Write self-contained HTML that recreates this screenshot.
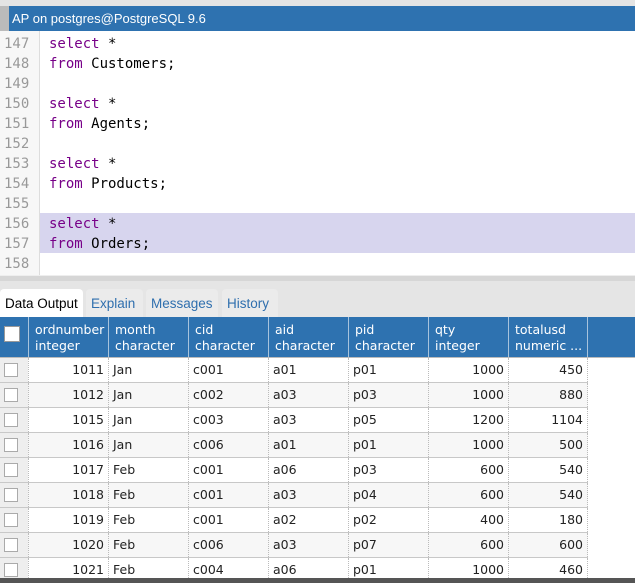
<!DOCTYPE html><html><head><style>
body{margin:0;width:635px;height:583px;overflow:hidden;background:#fff;font-family:"DejaVu Sans","Liberation Sans",sans-serif;position:relative}
.top{position:absolute;left:0;top:0;width:635px;height:6px;background:#e4e4e4}
.title{position:absolute;left:0;top:6px;width:635px;height:25px;background:#2e72b0;color:#fff;font:13px "Liberation Sans",sans-serif;line-height:25px}
.title .g{position:absolute;left:0;top:0;width:9px;height:25px;background:#bbb}
.title span{position:absolute;left:12px}
.gut{position:absolute;left:0;top:31px;width:39px;height:244px;background:#f7f7f7;border-right:1px solid #ddd}
.ln{position:absolute;left:4px;font:14px "DejaVu Sans Mono",monospace;color:#999;line-height:20px}
.code{position:absolute;left:49px;font:14px "DejaVu Sans Mono",monospace;color:#000;line-height:20px;white-space:pre}
.k{color:#708}
.hl{position:absolute;left:40px;top:213px;width:595px;height:40px;background:#d7d5ee}
.sep{position:absolute;left:0;top:275px;width:635px;height:6px;background:#d6d6d6;border-top:1px solid #eee}
.tabs{position:absolute;left:0;top:281px;width:635px;height:36px;background:#e5e5e5}
.tab{position:absolute;top:8px;height:28px;font:13.5px "Liberation Sans",sans-serif;line-height:30px;color:#2f6fae;background:#ebebeb;border-radius:4px 4px 0 0;padding:0 5px;white-space:nowrap;box-sizing:border-box}
.hdr{position:absolute;left:0;top:317px;width:635px;height:40px;background:#2e72b0;border-bottom:1px solid #bbb}
.hc{position:absolute;top:0;height:40px;border-left:1px solid #a7c3dd;color:#fff;font-size:12.5px;line-height:16px;padding:5px 0 0 6px;box-sizing:border-box}
.row{position:absolute;left:0;width:588px;height:25px;border-bottom:1px solid #c8c8c8;box-sizing:border-box;font-size:12.5px;color:#222}
.c{position:absolute;top:0;height:24px;line-height:24px;border-left:1px dotted #bbb;box-sizing:border-box;padding:0 4px}
.r{text-align:right}
.cb{position:absolute;left:0;top:0;width:28px;height:24px;background:#eee}
.cb i{position:absolute;left:4px;top:5px;width:12px;height:12px;background:#fff;border:1px solid #aaa}
.bot{position:absolute;left:0;top:578px;width:635px;height:5px;background:#555}
</style></head><body>
<div class="top"></div>
<div class="title"><div class="g"></div><span>AP on postgres@PostgreSQL 9.6</span></div>
<div class="gut"></div>
<div class="hl"></div>
<div class="ln" style="top:34px">147<br>148<br>149<br>150<br>151<br>152<br>153<br>154<br>155<br>156<br>157<br>158</div>
<div class="code" style="top:34px"><span class="k">select</span> *
<span class="k">from</span> Customers;

<span class="k">select</span> *
<span class="k">from</span> Agents;

<span class="k">select</span> *
<span class="k">from</span> Products;

<span class="k">select</span> *
<span class="k">from</span> Orders;
</div>
<div class="sep"></div>
<div class="tabs">
<div class="tab" style="left:0;width:83px;background:#fff;color:#000">Data Output</div>
<div class="tab" style="left:86px;width:57px">Explain</div>
<div class="tab" style="left:146px;width:72px">Messages</div>
<div class="tab" style="left:222px;width:56px">History</div>
</div>
<div class="hdr">
<div style="position:absolute;left:4px;top:9px;width:14px;height:14px;background:#fff;border:1px solid #999"></div>
<div class="hc" style="left:28px;width:80px">ordnumber<br>integer</div>
<div class="hc" style="left:108px;width:80px">month<br>character</div>
<div class="hc" style="left:188px;width:80px">cid<br>character</div>
<div class="hc" style="left:268px;width:80px">aid<br>character</div>
<div class="hc" style="left:348px;width:80px">pid<br>character</div>
<div class="hc" style="left:428px;width:80px">qty<br>integer</div>
<div class="hc" style="left:508px;width:80px;border-right:1px solid #a7c3dd">totalusd<br>numeric ...</div>
</div>
<div id="rows"></div>
<script>
var d=[[1011,'Jan','c001','a01','p01',1000,450],[1012,'Jan','c002','a03','p03',1000,880],[1015,'Jan','c003','a03','p05',1200,1104],[1016,'Jan','c006','a01','p01',1000,500],[1017,'Feb','c001','a06','p03',600,540],[1018,'Feb','c001','a03','p04',600,540],[1019,'Feb','c001','a02','p02',400,180],[1020,'Feb','c006','a03','p07',600,600],[1021,'Feb','c004','a06','p01',1000,460]];
var h='';d.forEach(function(r,i){var bg=i%2?'#f7f7f7':'#fff';h+='<div class="row" style="top:'+(358+i*25)+'px;background:'+bg+'"><div class="cb"><i></i></div>'+
'<div class="c r" style="left:28px;width:80px">'+r[0]+'</div><div class="c" style="left:108px;width:80px">'+r[1]+'</div><div class="c" style="left:188px;width:80px">'+r[2]+'</div><div class="c" style="left:268px;width:80px">'+r[3]+'</div><div class="c" style="left:348px;width:80px">'+r[4]+'</div><div class="c r" style="left:428px;width:80px">'+r[5]+'</div><div class="c r" style="left:508px;width:80px;border-right:1px dotted #bbb">'+r[6]+'</div></div>'});
document.getElementById('rows').innerHTML=h;
</script>
<div class="bot"></div>
</body></html>
